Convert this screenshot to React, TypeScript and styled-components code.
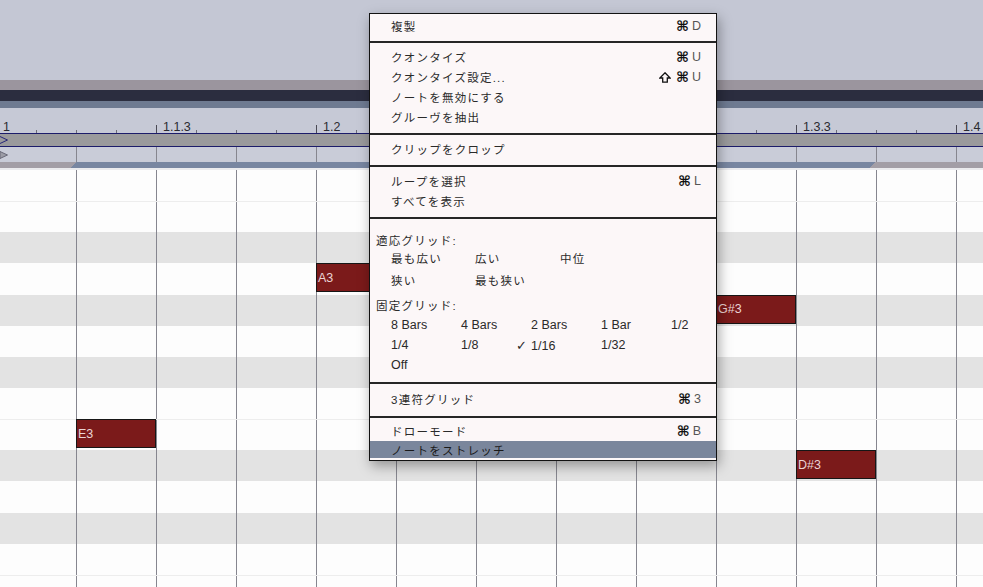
import React from "react";
import styled, { createGlobalStyle } from "styled-components";

const GlobalStyle = createGlobalStyle`
  html, body { margin: 0; padding: 0; background: #fdfdfd; }
  body {
    font-family: "Liberation Sans", "Noto Sans CJK JP", sans-serif;
    overflow: hidden;
  }
`;

const ROW_H = 31.15;
const COL = 80;
const FIRST_LINE = 76;

const gridLines =
  "repeating-linear-gradient(to right, transparent 0 76px, #86868f 76px 77px, transparent 77px 80px)";

const Page = styled.div`
  position: relative;
  width: 983px;
  height: 587px;
  overflow: hidden;
  display: flex;
  flex-direction: column;
  background: #fdfdfd;
`;

const TopArea = styled.div`
  flex: none;
  height: 80px;
  background: #c4c7d4;
`;

const Band = styled.div<{ $h: number; $c: string }>`
  flex: none;
  height: ${(p) => p.$h}px;
  background: ${(p) => p.$c};
`;

const Ruler = styled.div`
  flex: none;
  height: 25px;
  background: #c6c9d6;
  display: flex;
  overflow: hidden;
`;

const RulerSeg = styled.div`
  flex: none;
  width: 160px;
  display: flex;
  align-items: flex-end;
  background-image: linear-gradient(to right, #6c6c78 0 1px, transparent 1px);
  background-size: 40px 3px;
  background-repeat: repeat-x;
  background-position: left bottom;
  &:first-child {
    margin-left: -4px;
  }
`;

const BigTick = styled.span`
  flex: none;
  width: 1px;
  height: 8px;
  background: #4a4a55;
`;

const RulerLabel = styled.span`
  font-size: 12.5px;
  line-height: 1;
  color: #2a2a30;
  margin-left: 6px;
  white-space: nowrap;
`;

const NavyLine = styled.div`
  flex: none;
  height: 1px;
  background: #1c1c6a;
`;

const LoopBar = styled.div`
  flex: none;
  height: 12px;
  background: #9a9a9c;
  display: flex;
  align-items: center;
`;

const Strip = styled.div`
  flex: none;
  height: 15px;
  background-color: #c9ccd8;
  background-image: ${gridLines};
  display: flex;
  align-items: center;
`;

const ClipBar = styled.div`
  flex: none;
  height: 6px;
  display: flex;
  background: #a39ea6;
`;

const ClipPad = styled.div<{ $w: number }>`
  flex: none;
  width: ${(p) => p.$w}px;
`;

const ClipEdge = styled.div<{ $end?: boolean }>`
  flex: none;
  width: 6px;
  background: ${(p) =>
    p.$end
      ? "linear-gradient(135deg, #7886a1 50%, #a39ea6 50%)"
      : "linear-gradient(135deg, #a39ea6 50%, #7886a1 50%)"};
`;

const ClipRegion = styled.div`
  flex: none;
  width: 794px;
  background: #7886a1;
`;

const GapLine = styled.div`
  flex: none;
  height: 2px;
  background: #ebebee;
`;

const Roll = styled.div`
  position: relative;
  flex: 1;
  display: flex;
  flex-direction: column;
`;

const KeyRow = styled.div<{ $black: boolean; $edge: boolean }>`
  flex: none;
  height: ${ROW_H}px;
  background-color: ${(p) => (p.$black ? "#e3e3e3" : "#fdfdfd")};
  background-image: ${gridLines};
  box-shadow: ${(p) => (p.$edge ? "inset 0 1px 0 #ededed" : "none")};
`;

const Note = styled.div`
  position: absolute;
  box-sizing: border-box;
  width: 80px;
  height: 29px;
  background: #7b1a1a;
  border: 1px solid #161616;
  color: #ead4d4;
  font-size: 12.5px;
  display: flex;
  align-items: center;
  padding-left: 1px;
`;

const Menu = styled.div`
  position: absolute;
  left: 369px;
  top: 13px;
  width: 348px;
  box-sizing: border-box;
  background: #fcf7f8;
  border: 1px solid #121212;
  box-shadow: 2px 5px 12px rgba(0, 0, 0, 0.35);
  color: #2a2a2a;
`;

const Section = styled.div<{ $pt: number; $pb: number }>`
  padding: ${(p) => p.$pt}px 0 ${(p) => p.$pb}px;
`;

const Sep = styled.div`
  height: 2px;
  background: #262626;
`;

const Item = styled.div<{ $active?: boolean }>`
  display: flex;
  align-items: center;
  justify-content: space-between;
  height: ${(p) => (p.$active ? 17 : 20)}px;
  padding: 0 15px 0 21px;
  background: ${(p) => (p.$active ? "#7a869c" : "transparent")};
  color: ${(p) => (p.$active ? "#1a1a1a" : "#2a2a2a")};
`;

const Label = styled.span`
  font-size: 11.5px;
  letter-spacing: 1.25px;
  white-space: nowrap;
`;

const Shortcut = styled.span`
  display: flex;
  align-items: center;
  gap: 3px;
`;

const Glyph = styled.span`
  font-family: "DejaVu Sans", sans-serif;
  font-weight: bold;
  font-size: 14px;
  line-height: 1;
  color: #111;
`;

const ShiftIcon = styled.svg`
  flex: none;
  width: 12px;
  height: 11px;
  margin-right: 2px;
`;

const KeyChar = styled.span`
  font-size: 12.5px;
  color: #555;
`;

const GroupHeader = styled.div<{ $mt?: number }>`
  height: 18px;
  margin-top: ${(p) => p.$mt ?? 0}px;
  display: flex;
  align-items: center;
  padding-left: 6px;
  font-size: 11.5px;
  letter-spacing: 1.25px;
  white-space: nowrap;
`;

const OptionGrid = styled.div<{ $cols: string; $gap: number; $mt?: number }>`
  display: grid;
  grid-template-columns: ${(p) => p.$cols};
  grid-auto-rows: 18px;
  row-gap: ${(p) => p.$gap}px;
  margin-top: ${(p) => p.$mt ?? 0}px;
  padding-left: 21px;
  align-items: center;
`;

const Option = styled.span<{ $jp?: boolean }>`
  font-size: ${(p) => (p.$jp ? "11.5px" : "12.5px")};
  letter-spacing: ${(p) => (p.$jp ? "1.25px" : "0")};
  white-space: nowrap;
`;

const Check = styled.span`
  display: inline-block;
  width: 15px;
  margin-left: -15px;
  font-family: "DejaVu Sans", sans-serif;
  font-size: 13px;
`;

const rows = [
  { n: "C4", b: false, e: false },
  { n: "B3", b: false, e: true },
  { n: "A#3", b: true, e: false },
  { n: "A3", b: false, e: false },
  { n: "G#3", b: true, e: false },
  { n: "G3", b: false, e: false },
  { n: "F#3", b: true, e: false },
  { n: "F3", b: false, e: false },
  { n: "E3", b: false, e: true },
  { n: "D#3", b: true, e: false },
  { n: "D3", b: false, e: false },
  { n: "C#3", b: true, e: false },
  { n: "C3", b: false, e: false },
  { n: "B2", b: false, e: true },
  { n: "A#2", b: true, e: false },
];

const notes = [
  { name: "E3", row: 8, col: 0 },
  { name: "A3", row: 3, col: 3 },
  { name: "G#3", row: 4, col: 8 },
  { name: "D#3", row: 9, col: 9 },
];

const rulerLabels = ["1", "1.1.3", "1.2", "1.2.3", "1.3", "1.3.3", "1.4"];

const Sc = ({ k, shift }: { k: string; shift?: boolean }) => (
  <Shortcut>
    {shift && (
      <ShiftIcon viewBox="0 0 12 11">
        <path
          d="M6 0.8 L11.2 6 H8.3 V10.2 H3.7 V6 H0.8 Z"
          fill="none"
          stroke="#111"
          strokeWidth="1.3"
          strokeLinejoin="miter"
        />
      </ShiftIcon>
    )}
    <Glyph>⌘</Glyph>
    <KeyChar>{k}</KeyChar>
  </Shortcut>
);

export default function App() {
  return (
    <>
      <GlobalStyle />
      <Page>
        <TopArea />
        <Band $h={10} $c="#9b959e" />
        <Band $h={11} $c="#2b2d3f" />
        <Band $h={7} $c="#6e7a91" />
        <Ruler>
          {rulerLabels.map((l) => (
            <RulerSeg key={l}>
              <BigTick />
              <RulerLabel>{l}</RulerLabel>
            </RulerSeg>
          ))}
        </Ruler>
        <NavyLine />
        <LoopBar>
          <svg width="9" height="8" viewBox="0 0 9 8">
            <polyline points="0,0.5 7.5,4 0,7.5" fill="none" stroke="#26267a" strokeWidth="1" />
          </svg>
        </LoopBar>
        <NavyLine />
        <Strip>
          <svg width="9" height="8" viewBox="0 0 9 8">
            <polygon points="0,0.5 7.5,4 0,7.5" fill="#9c9ca6" stroke="#6a6a78" strokeWidth="1" />
          </svg>
        </Strip>
        <ClipBar>
          <ClipPad $w={70} />
          <ClipEdge />
          <ClipRegion />
          <ClipEdge $end />
        </ClipBar>
        <GapLine />
        <Roll>
          {rows.map((r) => (
            <KeyRow key={r.n} $black={r.b} $edge={r.e} />
          ))}
          {notes.map((n) => (
            <Note
              key={n.name}
              style={{ left: FIRST_LINE + n.col * COL, top: n.row * ROW_H }}
            >
              {n.name}
            </Note>
          ))}
        </Roll>

        <Menu>
          <Section $pt={2} $pb={5}>
            <Item>
              <Label>複製</Label>
              <Sc k="D" />
            </Item>
          </Section>
          <Sep />
          <Section $pt={4} $pb={6}>
            <Item>
              <Label>クオンタイズ</Label>
              <Sc k="U" />
            </Item>
            <Item>
              <Label>クオンタイズ設定...</Label>
              <Sc k="U" shift />
            </Item>
            <Item>
              <Label>ノートを無効にする</Label>
            </Item>
            <Item>
              <Label>グルーヴを抽出</Label>
            </Item>
          </Section>
          <Sep />
          <Section $pt={4} $pb={6}>
            <Item>
              <Label>クリップをクロップ</Label>
            </Item>
          </Section>
          <Sep />
          <Section $pt={4} $pb={6}>
            <Item>
              <Label>ループを選択</Label>
              <Sc k="L" />
            </Item>
            <Item>
              <Label>すべてを表示</Label>
            </Item>
          </Section>
          <Sep />
          <Section $pt={12} $pb={8}>
            <GroupHeader>適応グリッド:</GroupHeader>
            <OptionGrid $cols="84px 85px 85px" $gap={4}>
              <Option $jp>最も広い</Option>
              <Option $jp>広い</Option>
              <Option $jp>中位</Option>
              <Option $jp>狭い</Option>
              <Option $jp>最も狭い</Option>
            </OptionGrid>
            <GroupHeader $mt={7}>固定グリッド:</GroupHeader>
            <OptionGrid $cols="70px 70px 70px 70px 70px" $gap={2} $mt={2}>
              <Option>8 Bars</Option>
              <Option>4 Bars</Option>
              <Option>2 Bars</Option>
              <Option>1 Bar</Option>
              <Option>1/2</Option>
              <Option>1/4</Option>
              <Option>1/8</Option>
              <Option>
                <Check>✓</Check>1/16
              </Option>
              <Option>1/32</Option>
              <span />
              <Option>Off</Option>
            </OptionGrid>
          </Section>
          <Sep />
          <Section $pt={5} $pb={7}>
            <Item>
              <Label>3連符グリッド</Label>
              <Sc k="3" />
            </Item>
          </Section>
          <Sep />
          <Section $pt={3} $pb={2}>
            <Item>
              <Label>ドローモード</Label>
              <Sc k="B" />
            </Item>
            <Item $active>
              <Label>ノートをストレッチ</Label>
            </Item>
          </Section>
        </Menu>
      </Page>
    </>
  );
}
